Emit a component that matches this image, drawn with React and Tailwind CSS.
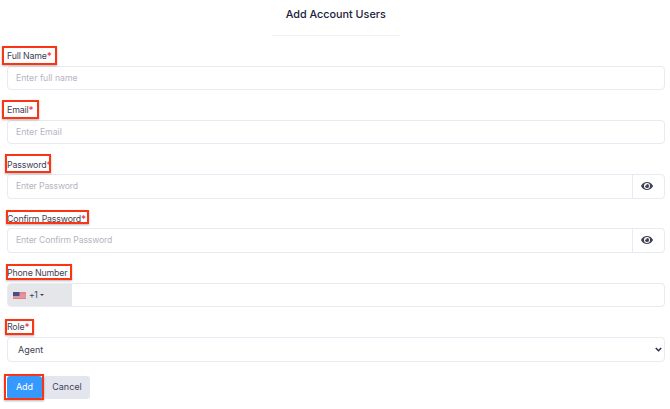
import { FaEye } from 'react-icons/fa'

const boxClass = 'pointer-events-none absolute border-2 border-[#f93514] shadow-[0_1px_2px_rgba(0,0,0,0.3)]'

export default function App() {
    return (
        <main className="h-[409px] w-[670px] overflow-hidden bg-white pl-[7px] pr-[5.5px] font-['Inter',sans-serif] text-[#3f4254]">
            <header className="mx-auto flex h-[35.5px] w-[128px] items-start justify-center border-b border-[#eff0f6] pt-[5px]">
                <h1 className="whitespace-nowrap text-[10.8px] font-medium leading-[20px] text-[#20213c]">Add Account Users</h1>
            </header>

            <form className="pt-[10.5px]">
                <Field label="Full Name" required box="-left-[5px] top-0 h-[19px] w-[55px]">
                    <TextInput placeholder="Enter full name" />
                </Field>
                <Field label="Email" required box="-left-[5px] top-0 h-[18.5px] w-[37px]">
                    <TextInput placeholder="Enter Email" />
                </Field>
                <Field label="Password" required box="-left-[2px] -top-[0.5px] h-[19px] w-[46px]">
                    <PasswordInput placeholder="Enter Password" />
                </Field>
                <Field label="Confirm Password" required box="-left-[1px] top-[1px] h-[14px] w-[83px]">
                    <PasswordInput placeholder="Enter Confirm Password" />
                </Field>
                <Field label="Phone Number" box="-left-[1px] top-[1px] h-[16px] w-[66px]">
                    <div className="flex h-[24.5px] overflow-hidden rounded-[4px] border border-[#e8e9f2]">
                        <div className="-m-px flex w-[65px] items-center bg-[#e5e6ea] pl-[6px]">
                            <Flag />
                            <span className="ml-[3px] text-[8.7px] tracking-[-0.5px]">+1</span>
                            <svg className="ml-[3px] h-[2px] w-[4px]" viewBox="0 0 4 2">
                                <path fill="#3f4254" d="M0 0h4L2 2z" />
                            </svg>
                        </div>
                    </div>
                </Field>
                <Field label="Role" required box="-left-[2px] top-[1.5px] h-[16px] w-[29px]">
                    <div className="flex h-[24.5px] items-center justify-between rounded-[4px] border border-[#e8e9f2] pl-[10px] pr-[2px]">
                        <span className="text-[9px]">Agent</span>
                        <svg className="h-[5px] w-[7px]" viewBox="0 0 7 5" fill="none" stroke="#30324a" strokeWidth="1.6">
                            <path d="M.8 1 3.5 3.7 6.2 1" />
                        </svg>
                    </div>
                </Field>

                <div className="flex items-start gap-[2px] pt-[4px]">
                    <div className="relative h-[23.5px]">
                        <button type="button" className="flex h-[23.5px] w-[35px] items-center justify-center rounded-[3px] bg-[#3699ff] pb-[2px] text-[9px] leading-none text-white">Add</button>
                        <span className={`${boxClass} -left-[3px] -top-[2px] h-[26px] w-[39.5px]`} />
                    </div>
                    <button type="button" className="flex h-[23.5px] w-[46px] items-center justify-center rounded-[3px] bg-[#e4e6ef] pb-[2px] text-[9px] leading-none">Cancel</button>
                </div>
            </form>
        </main>
    )
}

function Field({ label, required, box, children }) {
    return (
        <div className="h-[54.3px]">
            <div className="relative h-[19.6px] text-[8.8px] leading-[19.6px] tracking-[-0.16px]">
                <span className="whitespace-nowrap">
                    {label}
                    {required && <span className="text-[9.5px] font-semibold leading-none text-[#f62e40]">*</span>}
                </span>
                <span className={`${boxClass} ${box}`} />
            </div>
            {children}
        </div>
    )
}

function TextInput({ placeholder }) {
    return (
        <input
            placeholder={placeholder}
            className="block h-[24.5px] w-full rounded-[4px] border border-[#e8e9f2] px-[8px] text-[8.7px] placeholder:text-[#b5b5c3]"
        />
    )
}

function PasswordInput({ placeholder }) {
    return (
        <div className="flex h-[24.5px] rounded-[4px] border border-[#e8e9f2]">
            <input
                placeholder={placeholder}
                className="min-w-0 flex-1 px-[8px] text-[8.7px] tracking-[-0.15px] placeholder:text-[#b5b5c3]"
            />
            <button type="button" className="flex w-[32px] items-center justify-center border-l border-[#e8e9f2] pb-[1px] pr-[3px]">
                <FaEye className="h-[12px] w-[12px] text-[#3f4254]" />
            </button>
        </div>
    )
}

function Flag() {
    return (
        <svg className="h-[7px] w-[13px]" viewBox="0 0 13 7">
            <path fill="#f0c9cf" d="M0 0h13v7H0z" />
            <path stroke="#d9606c" strokeWidth=".7" d="M0 .4h13M0 1.6h13M0 2.8h13M0 4h13M0 5.2h13M0 6.5h13" />
            <path fill="#4b4d86" d="M0 0h6.5v4H0z" />
        </svg>
    )
}
